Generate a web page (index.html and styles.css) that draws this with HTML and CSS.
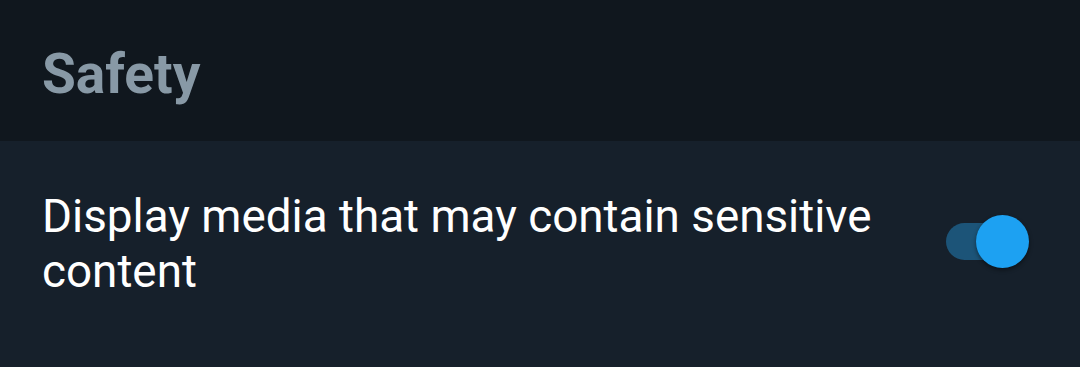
FILE: index.html
```html
<!DOCTYPE html>
<html>
<head>
<meta charset="utf-8">
<link rel="stylesheet" href="styles.css">
</head>
<body>
<div class="header"><h2 class="title">Safety</h2></div>
<div class="row">
  <div class="label">Display media that may contain sensitive content</div>
  <div class="switch"><div class="track"></div><div class="knob"></div></div>
</div>
</body>
</html>
```
FILE: styles.css
```css
html, body { margin: 0; padding: 0; }
body {
  width: 1080px;
  height: 367px;
  background: #16202b;
  font-family: Roboto, "Noto Sans", sans-serif;
  overflow: hidden;
}
.header {
  height: 141px;
  background: #10171e;
  padding: 47px 0 0 42px;
  box-sizing: border-box;
}
.title {
  margin: 0;
  font-size: 55px;
  font-weight: 700;
  color: #8899a6;
  line-height: 55px;
}
.row {
  display: flex;
  align-items: flex-start;
  justify-content: space-between;
  padding: 48px 51px 0 42px;
}
.label {
  font-size: 45.8px;
  line-height: 55px;
  color: #ffffff;
  width: 870px;
}
.switch {
  position: relative;
  width: 83px;
  height: 53px;
  margin-top: 26px;
}
.track {
  position: absolute;
  left: 0;
  top: 8px;
  width: 78px;
  height: 37px;
  border-radius: 19px;
  background: #1c5478;
}
.knob {
  position: absolute;
  left: 30px;
  top: 0;
  width: 53px;
  height: 53px;
  border-radius: 50%;
  background: #1da1f2;
  box-shadow: 0 2px 4px rgba(0,0,0,0.45);
}
```
